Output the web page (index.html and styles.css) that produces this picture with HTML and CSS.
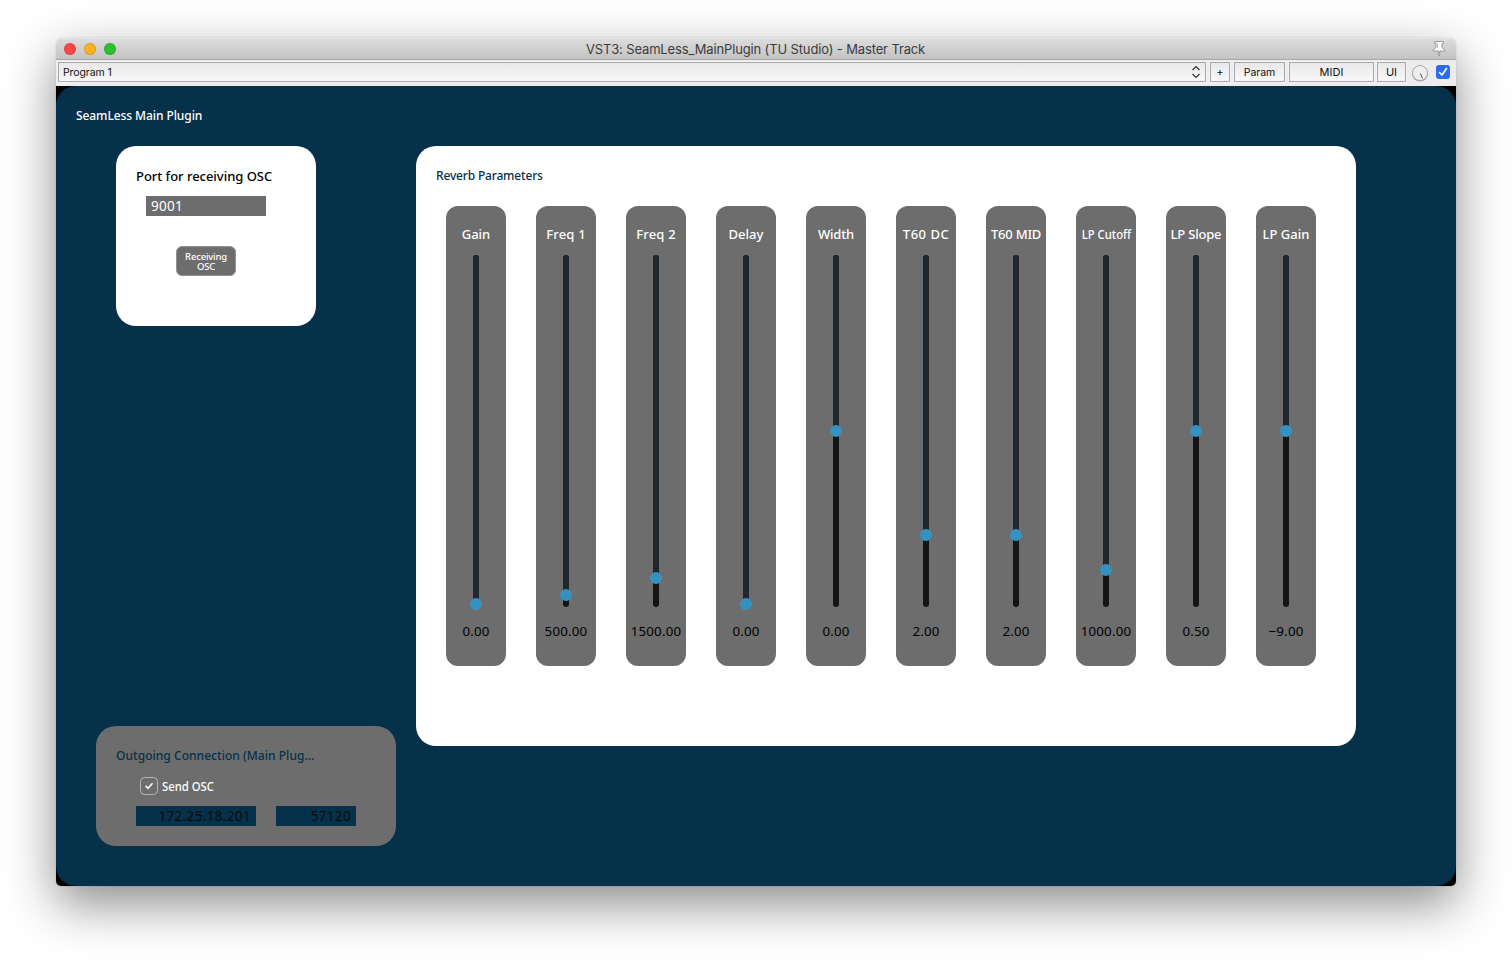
FILE: index.html
```html
<!DOCTYPE html>
<html lang="en">
<head>
<meta charset="utf-8">
<title>VST3: SeamLess_MainPlugin</title>
<link rel="stylesheet" href="styles.css">
</head>
<body>
<main class="window">
  <header class="titlebar">
    <div class="lights"><i class="light red"></i><i class="light amber"></i><i class="light green"></i></div>
    <div class="title">VST3: SeamLess_MainPlugin (TU Studio) - Master Track</div>
    <svg class="pin" width="16" height="17" viewBox="0 0 16 17"><path d="M3.500 1.500h9v2h-1.500v4l3 2.500v1H8.700v4l-.7 1-.7-1v-4H2v-1l3-2.500v-4H3.500z" fill="#fbfbfb" stroke="#999" stroke-width="1"/><path d="M6.500 3.500v4.500" stroke="#bbb"/></svg>
  </header>
  <div class="toolbar">
    <div class="box program"><span>Program 1</span>
      <svg width="10" height="14" viewBox="0 0 10 14"><path d="M1.500 5 5 1.500 8.500 5M1.500 9 5 12.500 8.500 9" fill="none" stroke="#333" stroke-width="1.200"/></svg>
    </div>
    <div class="box plus">+</div>
    <div class="box param">Param</div>
    <div class="box midi">MIDI</div>
    <div class="box ui">UI</div>
    <svg class="knob" width="18" height="18" viewBox="0 0 18 18"><circle cx="9" cy="9.800" r="7.800" fill="#999"/><circle cx="9" cy="9" r="7.500" fill="#eee" stroke="#aaa"/><path d="M9.500 9.500l2 5" stroke="#555"/></svg>
    <svg class="check" width="14" height="14" viewBox="0 0 14 14"><rect width="14" height="14" rx="3" fill="#2d6cf0"/><path d="M3.500 7.500 6 10l4.500-6.500" fill="none" stroke="#fff" stroke-width="1.600" stroke-linecap="round" stroke-linejoin="round"/></svg>
  </div>
  <div class="stage">
    <div class="plugin">
      <h1 class="plugin-name">SeamLess Main Plugin</h1>
      <div class="columns">
        <div class="left">
          <section class="port-card">
            <label class="port-label">Port for receiving OSC</label>
            <div class="port-field">9001</div>
            <div class="osc-button"><span>Receiving</span><span>OSC</span></div>
          </section>
          <section class="out-card">
            <h2 class="out-title">Outgoing Connection (Main Plug...</h2>
            <div class="send"><svg width="18" height="18" viewBox="0 0 18 18"><rect x=".5" y=".5" width="17" height="17" rx="4" fill="none" stroke="#b4b4b4"/><path d="M5.500 8.800 8 11.300l4.500-5" fill="none" stroke="#fff" stroke-width="1.500"/></svg><span>Send OSC</span></div>
            <div class="out-fields"><div class="field ip">172.25.18.201</div><div class="field out-port">57120</div></div>
          </section>
        </div>
        <section class="reverb">
          <h2 class="reverb-title">Reverb Parameters</h2>
          <div class="strips">
            <div class="strip"><span class="name">Gain</span><div class="track"><b style="height:349px"></b></div><span class="value">0.00</span></div>
            <div class="strip"><span class="name wide">Freq 1</span><div class="track"><b style="height:340px"></b></div><span class="value">500.00</span></div>
            <div class="strip"><span class="name wide">Freq 2</span><div class="track"><b style="height:323px"></b></div><span class="value">1500.00</span></div>
            <div class="strip"><span class="name">Delay</span><div class="track"><b style="height:349px"></b></div><span class="value">0.00</span></div>
            <div class="strip"><span class="name tight">Width</span><div class="track"><b style="height:176px"></b></div><span class="value">0.00</span></div>
            <div class="strip"><span class="name wider">T60 DC</span><div class="track"><b style="height:280px"></b></div><span class="value">2.00</span></div>
            <div class="strip"><span class="name tight">T60 MID</span><div class="track"><b style="height:280px"></b></div><span class="value">2.00</span></div>
            <div class="strip"><span class="name condensed">LP Cutoff</span><div class="track"><b style="height:314.500px"></b></div><span class="value">1000.00</span></div>
            <div class="strip"><span class="name tight">LP Slope</span><div class="track"><b style="height:176px"></b></div><span class="value">0.50</span></div>
            <div class="strip"><span class="name">LP Gain</span><div class="track"><b style="height:176px"></b></div><span class="value">−9.00</span></div>
          </div>
        </section>
      </div>
    </div>
  </div>
</main>
</body>
</html>
```
FILE: styles.css
```css
* { box-sizing: border-box; }
body { margin: 0; width: 1512px; height: 960px; padding: 38px 56px 0; overflow: hidden; background: #fff; font-family: "Noto Sans", sans-serif; }
h1, h2 { margin: 0; font-weight: 500; }
.window { width: 1400px; height: 848px; border-radius: 6px 6px 5px 5px; display: flex; flex-direction: column; box-shadow: 0 18px 50px rgba(0,0,0,.46), 0 0 1px rgba(0,0,0,.4); }
.titlebar { height: 22px; flex: none; display: grid; grid-template-columns: 100px 1fr 100px; align-items: center; border-radius: 6px 6px 0 0; background: linear-gradient(#dcdcdc, #c3c3c3); border-bottom: 1px solid #a9a9a9; border-top: 1px solid #e6e6e6; }
.lights { display: flex; gap: 8px; padding-left: 8px; }
.light { width: 12px; height: 12px; border-radius: 50%; border: 1px solid rgba(0,0,0,.12); }
.red { background: #fc4645; }
.amber { background: #fdb124; }
.green { background: #2bc232; }
.title { text-align: center; font: 13px/20px Inter, sans-serif; color: #3c3c3c; white-space: nowrap; letter-spacing: -.14px; padding-right: 1px; }
.pin { justify-self: end; margin-right: 9px; margin-top: -1px; }
.toolbar { height: 26px; flex: none; display: flex; align-items: center; padding: 0 6px 2px 2px; background: #ececec; font: 11px/16px Inter, sans-serif; color: #111; }
.toolbar > * { flex: none; }
.box { height: 20px; border: 1px solid #a7a7a7; background: linear-gradient(#e9e9e9, #f8f8f8); display: flex; align-items: center; justify-content: center; box-shadow: 0 0 0 1px #f3f3f3; }
.program { width: 1148px; justify-content: space-between; padding: 0 4px; font-size: 10.5px; letter-spacing: -.1px; }
.program span, .param { padding-top: 1px; }
.plus { width: 20px; margin-left: 4px; }
.param { width: 51px; margin-left: 4px; font-size: 10.5px; }
.midi { width: 85px; margin-left: 4px; }
.ui { width: 29px; margin-left: 3px; }
.knob { margin: 2px 0 0 5px; }
.check { margin-left: 7px; }
.stage { flex: 1; background: #000; border-radius: 0 0 5px 5px; }
.plugin { height: 100%; border-radius: 20px; background: #05314a; padding: 20px 0 40px; }
.plugin-name { height: 40px; padding-left: 20px; color: #fff; font-size: 12px; line-height: 20px; letter-spacing: -.08px; }
.columns { display: flex; gap: 20px; padding-left: 40px; height: 700px; }
.left { width: 300px; display: flex; flex-direction: column; justify-content: space-between; }
.port-card { width: 200px; height: 180px; margin-left: 20px; border-radius: 20px; background: #fff; padding: 20px; display: flex; flex-direction: column; align-items: flex-start; }
.port-label { height: 30px; font-size: 13px; font-weight: 500; line-height: 21px; letter-spacing: -.03px; color: #000; white-space: nowrap; }
.port-field { width: 120px; height: 20px; margin-left: 10px; padding-left: 5px; background: #6d6d6d; color: #fff; font-size: 13.5px; line-height: 20px; letter-spacing: .3px; }
.osc-button { width: 60px; height: 30px; margin: 30px 0 0 40px; border: 1px solid #929292; border-radius: 6px; background: #6d6d6d; color: #fff; display: flex; flex-direction: column; align-items: center; justify-content: center; font-size: 9.5px; font-weight: 500; line-height: 10px; letter-spacing: -.2px; padding-top: 1px; }
.out-card { height: 120px; border-radius: 20px; background: #6d6d6d; padding: 20px; }
.out-title { height: 30px; font-size: 12px; line-height: 20px; letter-spacing: .04px; color: #05314a; white-space: nowrap; }
.send { height: 20px; margin-left: 24px; display: flex; align-items: center; gap: 4px; color: #fff; font-size: 13px; font-weight: 500; }
.send span { transform: scaleX(.87); transform-origin: left; }
.out-fields { display: flex; gap: 20px; margin: 10px 0 0 20px; }
.field { height: 20px; padding-right: 5px; background: #05314a; color: #080c0f; text-align: right; font-size: 13.5px; line-height: 20px; letter-spacing: .35px; }
.ip { width: 120px; }
.out-port { width: 80px; }
.reverb { width: 940px; height: 600px; border-radius: 20px; background: #fff; padding: 20px 20px 0; }
.reverb-title { height: 40px; font-size: 12px; line-height: 20px; letter-spacing: -.17px; color: #05314a; }
.strips { display: flex; gap: 30px; padding-left: 10px; }
.strip { width: 60px; height: 460px; border-radius: 12px; background: #6d6d6d; display: flex; flex-direction: column; align-items: center; padding-top: 18px; white-space: nowrap; }
.name { height: 31px; color: #fff; font-size: 13px; font-weight: 500; line-height: 20px; }
.wide { letter-spacing: .2px; }
.wider { letter-spacing: .5px; }
.tight { letter-spacing: -.2px; }
.condensed { transform: scaleX(.87); }
.track { width: 6px; height: 352px; border-radius: 3px; background: #121619; }
.track b { display: flex; position: relative; width: 6px; border-radius: 3px 3px 0 0; background: #1f282d; }
.track b::after { content: ""; position: absolute; left: -3px; bottom: -6px; width: 12px; height: 12px; border-radius: 50%; background: #3592c0; }
.value { margin-top: 14px; color: #000; font-size: 13.3px; line-height: 20px; letter-spacing: .2px; }
```
